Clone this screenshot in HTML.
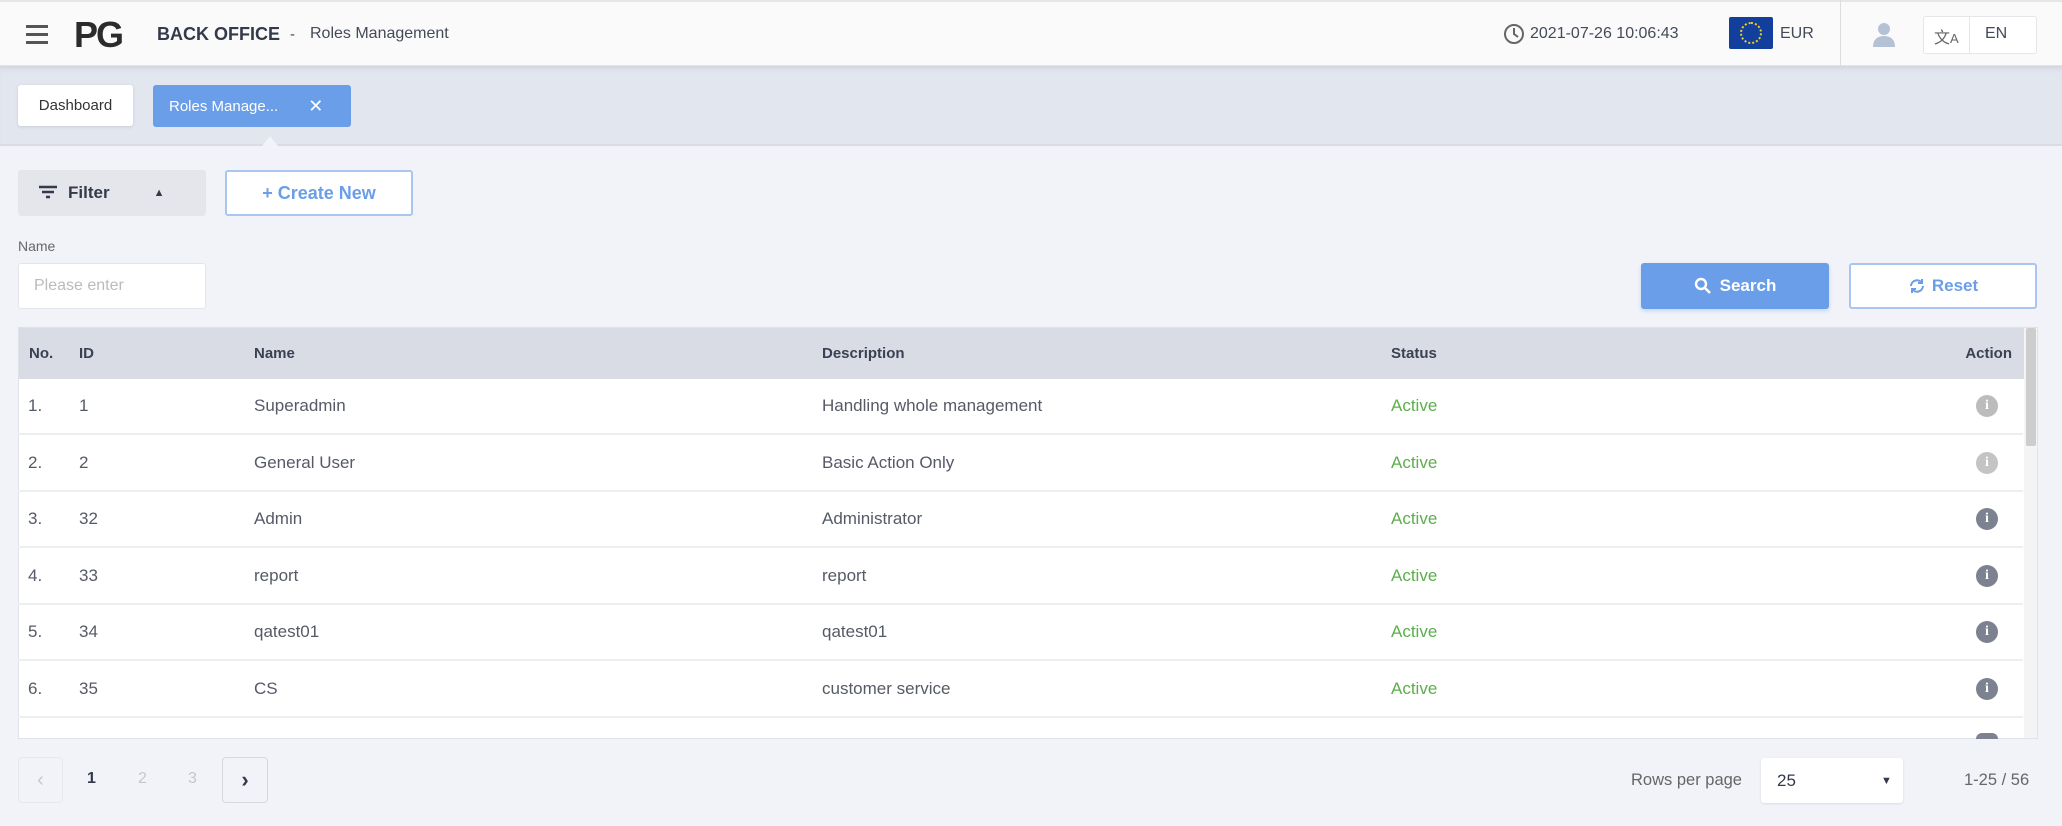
<!DOCTYPE html>
<html><head><meta charset="utf-8"><style>
*{box-sizing:border-box;margin:0;padding:0}
body{width:2062px;height:826px;overflow:hidden;background:#f1f3f8;font-family:"Liberation Sans",sans-serif;color:#555a66;position:relative}
.a{position:absolute}
.hdr{left:0;top:0;width:2062px;height:66px;background:#fafafa;border-bottom:1px solid #e2e4ea;border-top:2px solid #e6e6e6}
.tabs{left:0;top:66px;width:2062px;height:80px;background:#e2e6ee;box-shadow:inset 0 6px 6px -4px #cfd3db;border-bottom:2px solid #d8dce4}
.v{display:flex;align-items:center}
.tbl{left:18px;top:327px;width:2020px;height:412px;background:#fff;border:1px solid #dfe2e8;overflow:hidden}
.th{left:0;top:0;width:2005px;height:51px;background:#d9dce5;font-weight:bold;font-size:15px;color:#3b4152}
.row{left:0;width:2005px;height:57px;border-bottom:2px solid #eceef2;font-size:17px;color:#555a66}
.ic{width:22px;height:22px;border-radius:50%;color:#fff;font-weight:bold;font-size:14px;display:flex;align-items:center;justify-content:center;font-family:"Liberation Serif",serif}
</style></head><body>
<div class="a hdr"></div>
<div class="a" style="left:26px;top:25px;width:22px">
<div style="height:3px;background:#555;margin-bottom:5px"></div><div style="height:3px;background:#555;margin-bottom:5px"></div><div style="height:3px;background:#555"></div></div>
<div class="a" style="left:74px;top:14px;font-size:36px;font-weight:bold;color:#2b2b2b;letter-spacing:-2px">PG</div>
<div class="a" style="left:157px;top:24px;font-size:18px;font-weight:bold;color:#333a4a">BACK OFFICE</div>
<div class="a" style="left:290px;top:26px;font-size:15px;color:#444">-</div>
<div class="a" style="left:310px;top:25px;font-size:16px;color:#444a58">Roles Management</div>
<svg class="a" style="left:1503px;top:23px" width="22" height="22" viewBox="0 0 22 22"><circle cx="11" cy="11" r="9" fill="none" stroke="#666" stroke-width="2"/><path d="M11 5v6l4 3" fill="none" stroke="#666" stroke-width="2"/></svg>
<div class="a" style="left:1530px;top:25px;font-size:16px;color:#444a58">2021-07-26 10:06:43</div>
<div class="a" style="left:1729px;top:17px;width:44px;height:32px;background:#123f9c;border-radius:2px"><div style="position:absolute;left:11px;top:5px;width:22px;height:22px;border:2px dotted #f3d020;border-radius:50%"></div></div>
<div class="a" style="left:1780px;top:25px;font-size:16px;color:#444a58">EUR</div>
<div class="a" style="left:1840px;top:0;width:1px;height:66px;background:#ddd"></div>
<svg class="a" style="left:1871px;top:21px" width="26" height="26" viewBox="0 0 26 26"><circle cx="13" cy="8" r="6" fill="#b5c2d6"/><path d="M2 26c0-8 5-11 11-11s11 3 11 11z" fill="#b5c2d6"/></svg>
<div class="a" style="left:1923px;top:16px;width:114px;height:38px;background:#fff;border:1px solid #e4e6ea;border-radius:3px"></div>
<div class="a" style="left:1969px;top:16px;width:1px;height:38px;background:#e4e6ea"></div>
<div class="a" style="left:1934px;top:24px;font-size:16px;color:#666">文<span style="font-size:13px">A</span></div>
<div class="a" style="left:1985px;top:25px;font-size:16px;color:#444a58">EN</div>

<div class="a tabs"></div>
<div class="a v" style="left:18px;top:85px;width:115px;height:41px;background:#fff;border-radius:3px;box-shadow:0 1px 3px #c8ccd4;justify-content:center;font-size:15px;color:#333">Dashboard</div>
<div class="a v" style="left:153px;top:85px;width:198px;height:42px;background:#6a9ee8;border-radius:3px;font-size:15px;color:#fff;padding-left:16px">Roles Manage...<span style="margin-left:30px;font-size:18px">✕</span></div>
<div class="a" style="left:262px;top:136px;width:0;height:0;border-left:8px solid transparent;border-right:8px solid transparent;border-bottom:10px solid #f1f3f8"></div>

<div class="a v" style="left:18px;top:170px;width:188px;height:46px;background:#e4e6eb;border-radius:3px;font-size:17px;font-weight:bold;color:#333a4a;padding-left:20px">
<svg width="20" height="16" viewBox="0 0 20 16"><path d="M1 2h18M4 7h12M8 12h4" stroke="#333a4a" stroke-width="2.4"/></svg><span style="margin-left:10px">Filter</span><span style="margin-left:44px;font-size:11px">▲</span></div>
<div class="a v" style="left:225px;top:170px;width:188px;height:46px;background:#fff;border:2px solid #a9c6f0;border-radius:3px;justify-content:center;font-size:18px;font-weight:bold;color:#6a9ee8">+ Create New</div>
<div class="a" style="left:18px;top:238px;font-size:14px;color:#666">Name</div>
<div class="a v" style="left:18px;top:263px;width:188px;height:46px;background:#fff;border:1px solid #e4e6ea;border-radius:3px;padding-left:15px;font-size:16px;color:#bbb">Please enter</div>
<div class="a v" style="left:1641px;top:263px;width:188px;height:46px;background:#6a9ee8;border-radius:3px;justify-content:center;font-size:17px;font-weight:bold;color:#fff;box-shadow:0 2px 4px #c4d6f3">
<svg width="18" height="18" viewBox="0 0 18 18"><circle cx="7" cy="7" r="5" fill="none" stroke="#fff" stroke-width="2.4"/><path d="M11 11l5 5" stroke="#fff" stroke-width="2.6"/></svg><span style="margin-left:8px">Search</span></div>
<div class="a v" style="left:1849px;top:263px;width:188px;height:46px;background:#fff;border:2px solid #a9c6f0;border-radius:3px;justify-content:center;font-size:17px;font-weight:bold;color:#6a9ee8">
<svg width="18" height="18" viewBox="0 0 18 18"><path d="M3 9a6 6 0 0 1 11-3M15 9a6 6 0 0 1-11 3" fill="none" stroke="#6a9ee8" stroke-width="2"/><path d="M14 2v4h-4M4 16v-4h4" fill="none" stroke="#6a9ee8" stroke-width="2"/></svg><span style="margin-left:6px">Reset</span></div>

<div class="a tbl">
<div class="a th"><span class="a" style="left:10px;top:17px">No.</span><span class="a" style="left:60px;top:17px">ID</span><span class="a" style="left:235px;top:17px">Name</span><span class="a" style="left:803px;top:17px">Description</span><span class="a" style="left:1372px;top:17px">Status</span><span class="a" style="right:12px;top:17px">Action</span></div>
<div class="a" style="left:2005px;top:0;width:14px;height:412px;background:#f4f4f4"><div style="margin:0 2px;height:118px;background:#cdcdcd;border-radius:2px"></div></div>
</div>
<div class="a" style="left:18px;top:378px">
<div class="a row" style="top:0"><span class="a" style="left:10px;top:18px">1.</span><span class="a" style="left:61px;top:18px">1</span><span class="a" style="left:236px;top:18px">Superadmin</span><span class="a" style="left:804px;top:18px">Handling whole management</span><span class="a" style="left:1373px;top:18px;color:#5cae4c">Active</span><div class="a ic" style="left:1958px;top:17px;background:#bcbcbc">i</div></div>
<div class="a row" style="top:57px"><span class="a" style="left:10px;top:18px">2.</span><span class="a" style="left:61px;top:18px">2</span><span class="a" style="left:236px;top:18px">General User</span><span class="a" style="left:804px;top:18px">Basic Action Only</span><span class="a" style="left:1373px;top:18px;color:#5cae4c">Active</span><div class="a ic" style="left:1958px;top:17px;background:#c4c4c4">i</div></div>
<div class="a row" style="top:113px"><span class="a" style="left:10px;top:18px">3.</span><span class="a" style="left:61px;top:18px">32</span><span class="a" style="left:236px;top:18px">Admin</span><span class="a" style="left:804px;top:18px">Administrator</span><span class="a" style="left:1373px;top:18px;color:#5cae4c">Active</span><div class="a ic" style="left:1958px;top:17px;background:#7d8290">i</div></div>
<div class="a row" style="top:170px"><span class="a" style="left:10px;top:18px">4.</span><span class="a" style="left:61px;top:18px">33</span><span class="a" style="left:236px;top:18px">report</span><span class="a" style="left:804px;top:18px">report</span><span class="a" style="left:1373px;top:18px;color:#5cae4c">Active</span><div class="a ic" style="left:1958px;top:17px;background:#7d8290">i</div></div>
<div class="a row" style="top:226px"><span class="a" style="left:10px;top:18px">5.</span><span class="a" style="left:61px;top:18px">34</span><span class="a" style="left:236px;top:18px">qatest01</span><span class="a" style="left:804px;top:18px">qatest01</span><span class="a" style="left:1373px;top:18px;color:#5cae4c">Active</span><div class="a ic" style="left:1958px;top:17px;background:#7d8290">i</div></div>
<div class="a row" style="top:283px"><span class="a" style="left:10px;top:18px">6.</span><span class="a" style="left:61px;top:18px">35</span><span class="a" style="left:236px;top:18px">CS</span><span class="a" style="left:804px;top:18px">customer service</span><span class="a" style="left:1373px;top:18px;color:#5cae4c">Active</span><div class="a ic" style="left:1958px;top:17px;background:#7d8290">i</div></div>
<div class="a" style="left:1958px;top:355px;width:22px;height:6px;background:#7d8290;border-radius:11px 11px 0 0"></div>
</div>

<div class="a v" style="left:18px;top:757px;width:45px;height:46px;border:1px solid #e6e8ec;border-radius:4px;justify-content:center;color:#c8c8c8;font-size:20px">‹</div>
<div class="a" style="left:87px;top:770px;font-size:16px;font-weight:bold;color:#333a4a">1</div>
<div class="a" style="left:138px;top:770px;font-size:16px;color:#c4c6cc">2</div>
<div class="a" style="left:188px;top:770px;font-size:16px;color:#c4c6cc">3</div>
<div class="a v" style="left:222px;top:757px;width:46px;height:46px;border:1px solid #d6d8dc;border-radius:4px;justify-content:center;color:#333a4a;font-size:22px;font-weight:bold">›</div>
<div class="a" style="left:1631px;top:771px;font-size:16.5px;color:#666">Rows per page</div>
<div class="a v" style="left:1761px;top:758px;width:142px;height:45px;background:#fff;border-radius:3px;box-shadow:0 1px 2px #d8dade;padding-left:16px;font-size:17px;color:#333a4a">25<span style="position:absolute;left:120px;font-size:11px">▼</span></div>
<div class="a" style="left:1964px;top:771px;font-size:16.5px;color:#666">1-25 / 56</div>
</body></html>
